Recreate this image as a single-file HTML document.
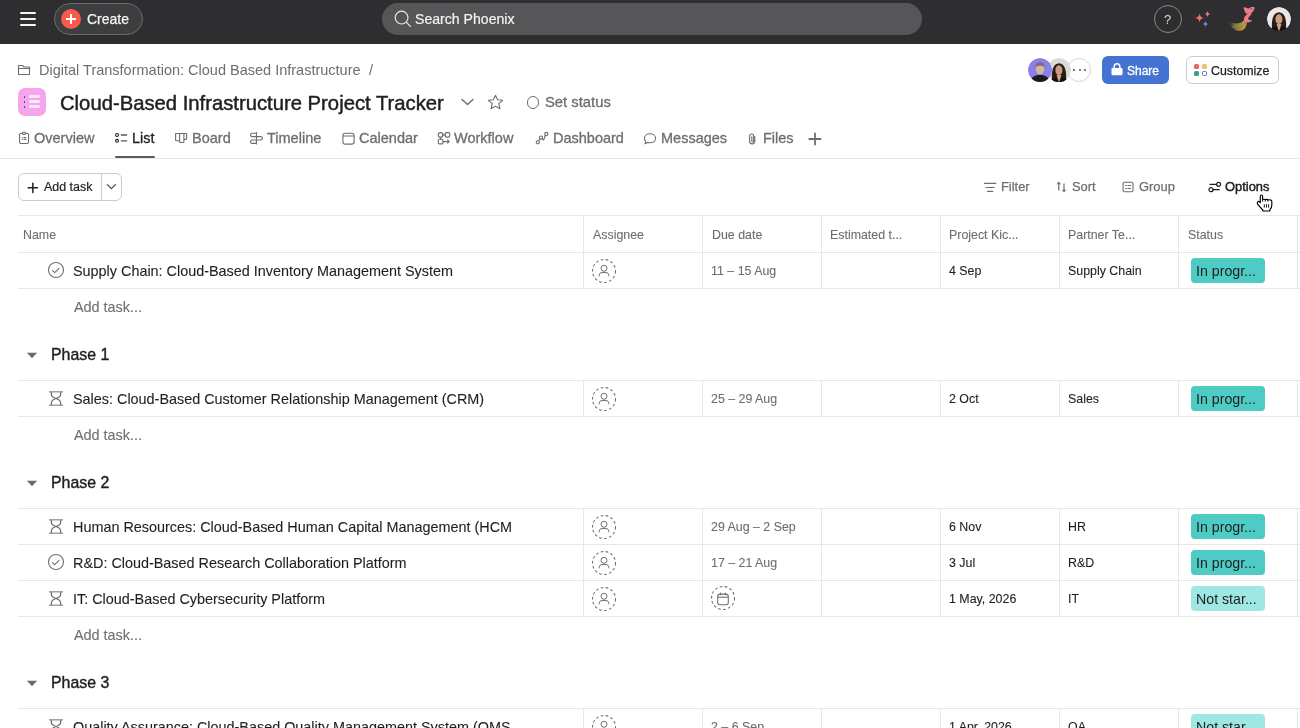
<!DOCTYPE html>
<html><head><meta charset="utf-8"><style>
html,body{margin:0;padding:0;}
body{width:1300px;height:728px;overflow:hidden;position:relative;background:#fff;font-family:"Liberation Sans",sans-serif;}
.t{position:absolute;white-space:nowrap;line-height:1;will-change:transform;}
</style></head><body>
<div style="position:absolute;left:0px;top:0px;width:1300px;height:44px;background:#2e2e30"></div>
<div style="position:absolute;left:20px;top:12.4px;width:16px;height:1.6px;background:#f5f5f5;border-radius:1px"></div>
<div style="position:absolute;left:20px;top:18.4px;width:16px;height:1.6px;background:#f5f5f5;border-radius:1px"></div>
<div style="position:absolute;left:20px;top:24.4px;width:16px;height:1.6px;background:#f5f5f5;border-radius:1px"></div>
<div style="position:absolute;left:54px;top:3px;width:89px;height:32px;background:#3d3e40;border:1px solid #6a6b6d;border-radius:16px;box-sizing:border-box"></div>
<div style="position:absolute;left:61px;top:9px;width:20px;height:20px;background:#fa5a4a;border-radius:50%"></div>
<div style="position:absolute;left:66px;top:18.15px;width:10px;height:1.7px;background:#fff"></div>
<div style="position:absolute;left:70.15px;top:14px;width:1.7px;height:10px;background:#fff"></div>
<div class="t" style="left:87px;top:12.35px;font-size:14px;color:#f5f4f3;-webkit-text-stroke:0.25px #f5f4f3">Create</div>
<div style="position:absolute;left:382.4px;top:3px;width:540px;height:32px;background:#565557;border-radius:16px"></div>
<svg style="position:absolute;left:393.6px;top:10.4px" width="18" height="18" viewBox="0 0 18 18"><circle cx="7.6" cy="7.6" r="6.4" fill="none" stroke="#e8e8e8" stroke-width="1.2"/><line x1="12.2" y1="12.2" x2="16.4" y2="16.4" stroke="#e8e8e8" stroke-width="1.2" stroke-linecap="round"/></svg>
<div class="t" style="left:414.6px;top:12.26px;font-size:14.1px;color:#f5f4f3;-webkit-text-stroke:0.2px #f5f4f3">Search Phoenix</div>
<div style="position:absolute;left:1153.5px;top:5px;width:28px;height:28px;border:1px solid #8a8a8c;border-radius:50%;box-sizing:border-box"></div>
<div class="t" style="left:1163.5px;top:12.50px;font-size:13px;color:#d8d8d8;">?</div>
<svg style="position:absolute;left:1190px;top:6px" width="26" height="26" viewBox="0 0 26 26"><path d="M9.5 7.6 Q9.94 11.56 13.9 12 Q9.94 12.44 9.5 16.4 Q9.06 12.44 5.1 12 Q9.06 11.56 9.5 7.6Z" fill="#f76b6b"/><path d="M17.5 4.7 Q17.83 7.67 20.8 8 Q17.83 8.33 17.5 11.3 Q17.17 8.33 14.2 8 Q17.17 7.67 17.5 4.7Z" fill="#ee6f86"/><path d="M15.5 14.8 Q15.82 17.68 18.7 18 Q15.82 18.32 15.5 21.2 Q15.18 18.32 12.3 18 Q15.18 17.68 15.5 14.8Z" fill="#8c78f0"/></svg>
<svg style="position:absolute;left:1220px;top:2px" width="40" height="34" viewBox="0 0 40 34"><defs><linearGradient id="tail" x1="0" y1="0.3" x2="1" y2="0.2"><stop offset="0" stop-color="#2e2e30" stop-opacity="0"/><stop offset="0.35" stop-color="#8a6d2a"/><stop offset="0.75" stop-color="#c19a2c"/><stop offset="1" stop-color="#d4a030"/></linearGradient></defs><path d="M24.8 15 C24.5 21 18 23.5 7 19.5 C10 25 15 29.5 20.5 28.8 C24.5 28.2 27.5 24.5 26.8 17 Z" fill="url(#tail)"/><path d="M12 24.5 C17 25.5 22 24.5 25.2 18.5" fill="none" stroke="#3fa59a" stroke-width="0.9" opacity="0.8"/><path d="M13 25.8 C18 27 23 25.8 25.8 20" fill="none" stroke="#6f5fb0" stroke-width="0.8" opacity="0.7"/><path d="M23.5 5.2 C25.5 5 27 6 28.5 6.5 C30 5.5 32 4.5 34.8 5.5 C34 8 33 10 31 11.5 C29.5 12.2 27.5 12 26 11.5 C25 10 24 8 23.5 5.2Z" fill="#f27a85"/><path d="M30.5 11 C27 12 24.6 13.5 24.2 16.2 C23.8 18.8 25.8 20.2 28 20.4 C30 20.6 31.6 19.4 32.2 17.6 C31 18.2 29.6 18.4 28.6 17.6 C27.8 16.8 28.4 14.8 31.5 12.5Z" fill="#f27a85"/><circle cx="31.3" cy="6.8" r="0.95" fill="#4d6fe0"/></svg>
<svg style="position:absolute;left:1267px;top:6.8px" width="24" height="24" viewBox="0 0 24 24"><defs><clipPath id="ca0"><circle cx="12" cy="12" r="12"/></clipPath></defs><g clip-path="url(#ca0)"><circle cx="12" cy="12" r="12" fill="#e9e8e6"/><path d="M5.2 25 C4.2 16 4.8 5.8 12 5.3 C19.2 5.8 19.8 16 18.8 25Z" fill="#2a1d17"/><ellipse cx="11.9" cy="12.2" rx="3.5" ry="4.9" fill="#c99d85"/><path d="M9.6 17 L12 25 L14.4 17Z" fill="#d0a38b"/><path d="M1.5 25 C3.5 20.5 7.5 19.8 9.4 19.6 L12 24.5 L14.6 19.6 C16.5 19.8 20.5 20.5 22.5 25Z" fill="#121111"/></g></svg>
<svg style="position:absolute;left:17px;top:64px" width="14" height="12" viewBox="0 0 14 12"><path d="M1.5 1.5 H5.5 L7 3 H12.5 V10.5 H1.5Z" fill="none" stroke="#6d6e6f" stroke-width="1.1" stroke-linejoin="round"/><line x1="1.5" y1="4.5" x2="12.5" y2="4.5" stroke="#6d6e6f" stroke-width="1"/></svg>
<div class="t" style="left:38.8px;top:62.73px;font-size:14.5px;color:#6d6e6f;">Digital Transformation: Cloud Based Infrastructure</div>
<div class="t" style="left:369px;top:62.73px;font-size:14.5px;color:#6d6e6f;">/</div>
<div style="position:absolute;left:18px;top:88px;width:28px;height:28px;background:#f4a5ec;border-radius:7px"></div>
<div style="position:absolute;left:23.6px;top:96px;width:1.6px;height:1.6px;background:#3d3a3c;border-radius:50%"></div>
<div style="position:absolute;left:29px;top:95.4px;width:11px;height:2.6px;background:#fbe7f8;border-radius:1.3px"></div>
<div style="position:absolute;left:23.6px;top:101px;width:1.6px;height:1.6px;background:#3d3a3c;border-radius:50%"></div>
<div style="position:absolute;left:29px;top:100.4px;width:11px;height:2.6px;background:#fbe7f8;border-radius:1.3px"></div>
<div style="position:absolute;left:23.6px;top:106px;width:1.6px;height:1.6px;background:#3d3a3c;border-radius:50%"></div>
<div style="position:absolute;left:29px;top:105.4px;width:11px;height:2.6px;background:#fbe7f8;border-radius:1.3px"></div>
<div class="t" style="left:59.7px;top:92.76px;font-size:20.25px;color:#1e1f21;-webkit-text-stroke:0.45px #1e1f21">Cloud-Based Infrastructure Project Tracker</div>
<svg style="position:absolute;left:460px;top:97px" width="15" height="10" viewBox="0 0 15 10"><path d="M2 2.5 L7.5 7.5 L13 2.5" fill="none" stroke="#6d6e6f" stroke-width="1.4" stroke-linecap="round" stroke-linejoin="round"/></svg>
<svg style="position:absolute;left:487px;top:93.6px" width="17" height="17" viewBox="0 0 17 17"><path d="M8.5 1.2 L10.6 5.8 L15.6 6.3 L11.8 9.7 L12.9 14.7 L8.5 12.1 L4.1 14.7 L5.2 9.7 L1.4 6.3 L6.4 5.8Z" fill="none" stroke="#6d6e6f" stroke-width="1.1" stroke-linejoin="round"/></svg>
<div style="position:absolute;left:526.5px;top:96px;width:12.5px;height:12.5px;border:1.2px solid #6d6e6f;border-radius:50%;box-sizing:border-box"></div>
<div class="t" style="left:544.8px;top:94.67px;font-size:14.8px;color:#6d6e6f;-webkit-text-stroke:0.3px #6d6e6f">Set status</div>
<div style="position:absolute;left:1067px;top:58px;width:24px;height:24px;background:#fff;border:1px solid #d9d7d5;border-radius:50%;box-sizing:border-box"></div>
<div style="position:absolute;left:1073.05px;top:68.6px;width:2.3px;height:2.3px;background:#555557;border-radius:50%"></div>
<div style="position:absolute;left:1078.55px;top:68.6px;width:2.3px;height:2.3px;background:#555557;border-radius:50%"></div>
<div style="position:absolute;left:1084.05px;top:68.6px;width:2.3px;height:2.3px;background:#555557;border-radius:50%"></div>
<svg style="position:absolute;left:1047px;top:58px" width="24" height="24" viewBox="0 0 24 24"><defs><clipPath id="ca2"><circle cx="12" cy="12" r="12"/></clipPath></defs><g clip-path="url(#ca2)"><circle cx="12" cy="12" r="12" fill="#dddbd6"/><path d="M5.2 25 C4.2 16 4.8 5.8 12 5.3 C19.2 5.8 19.8 16 18.8 25Z" fill="#2a1d17"/><ellipse cx="11.9" cy="12.2" rx="3.5" ry="4.9" fill="#c99d85"/><path d="M9.6 17 L12 25 L14.4 17Z" fill="#d0a38b"/><path d="M1.5 25 C3.5 20.5 7.5 19.8 9.4 19.6 L12 24.5 L14.6 19.6 C16.5 19.8 20.5 20.5 22.5 25Z" fill="#121111"/></g></svg>
<svg style="position:absolute;left:1027.5px;top:58px" width="24" height="24" viewBox="0 0 24 24"><defs><clipPath id="ca1"><circle cx="12" cy="12" r="12"/></clipPath></defs><g clip-path="url(#ca1)"><circle cx="12" cy="12" r="12" fill="#8b80e6"/><ellipse cx="12" cy="11" rx="4.3" ry="5.3" fill="#d6b2a0"/><path d="M7.4 9.5 C7.2 5.5 9.5 4.2 12 4.2 C14.8 4.2 16.8 5.5 16.6 9.5 C15.5 7.2 9 7.2 7.4 9.5Z" fill="#77716d"/><path d="M1 26 C3 18 8 17 12 17 C16 17 21 18 23 26Z" fill="#1b1b1b"/></g></svg>
<div style="position:absolute;left:1101.5px;top:56px;width:67px;height:28px;background:#4573d2;border-radius:6px"></div>
<svg style="position:absolute;left:1110px;top:62px" width="14" height="14" viewBox="0 0 14 14"><path d="M4.2 6 V4.6 A2.8 2.8 0 0 1 9.8 4.6 V6" fill="none" stroke="#fff" stroke-width="1.5"/><rect x="1.5" y="6" width="11" height="7.2" rx="1.2" fill="#fff"/></svg>
<div class="t" style="left:1127px;top:64.94px;font-size:12px;color:#ffffff;-webkit-text-stroke:0.3px #fff">Share</div>
<div style="position:absolute;left:1185.5px;top:56px;width:93.5px;height:28px;background:#fff;border:1px solid #cfcbcb;border-radius:6px;box-sizing:border-box"></div>
<div style="position:absolute;left:1194.3px;top:63.8px;width:5.2px;height:5.2px;background:#e8696b;border-radius:1.5px"></div>
<div style="position:absolute;left:1201.5px;top:63.8px;width:5.2px;height:5.2px;background:#f1bd6c;border-radius:1.5px"></div>
<div style="position:absolute;left:1194.3px;top:70.8px;width:5.2px;height:5.2px;background:#3f9e8b;border-radius:1.5px"></div>
<div style="position:absolute;left:1201.5px;top:70.8px;width:5.2px;height:5.2px;border:1.2px solid #4573d2;border-radius:1.5px;box-sizing:border-box"></div>
<div class="t" style="left:1210.6px;top:64.64px;font-size:12.36px;color:#1e1f21;-webkit-text-stroke:0.25px #1e1f21">Customize</div>
<div style="position:absolute;left:0px;top:158px;width:1300px;height:1px;background:#e9e7e6"></div>
<div class="t" style="left:33.9px;top:130.83px;font-size:14.5px;color:#6d6e6f;-webkit-text-stroke:0.3px #6d6e6f">Overview</div>
<div class="t" style="left:132px;top:130.83px;font-size:14.5px;color:#1e1f21;-webkit-text-stroke:0.3px #1e1f21">List</div>
<div class="t" style="left:192px;top:130.83px;font-size:14.5px;color:#6d6e6f;-webkit-text-stroke:0.3px #6d6e6f">Board</div>
<div class="t" style="left:267.3px;top:130.83px;font-size:14.5px;color:#6d6e6f;-webkit-text-stroke:0.3px #6d6e6f">Timeline</div>
<div class="t" style="left:359px;top:130.83px;font-size:14.5px;color:#6d6e6f;-webkit-text-stroke:0.3px #6d6e6f">Calendar</div>
<div class="t" style="left:454px;top:130.83px;font-size:14.5px;color:#6d6e6f;-webkit-text-stroke:0.3px #6d6e6f">Workflow</div>
<div class="t" style="left:552.6px;top:130.83px;font-size:14.5px;color:#6d6e6f;-webkit-text-stroke:0.3px #6d6e6f">Dashboard</div>
<div class="t" style="left:660.5px;top:130.83px;font-size:14.5px;color:#6d6e6f;-webkit-text-stroke:0.3px #6d6e6f">Messages</div>
<div class="t" style="left:762.5px;top:130.83px;font-size:14.5px;color:#6d6e6f;-webkit-text-stroke:0.3px #6d6e6f">Files</div>
<div style="position:absolute;left:115.3px;top:156px;width:40.2px;height:2px;background:#5a5b5e;border-radius:1px"></div>
<svg style="position:absolute;left:18px;top:131px" width="12" height="14" viewBox="0 0 12 14"><rect x="1.55" y="2.3" width="9" height="10.2" rx="1.6" fill="none" stroke="#6d6e6f" stroke-width="1.1" stroke-linecap="round" stroke-linejoin="round"/><rect x="4.3" y="1.2" width="3.4" height="2.2" rx="1.1" fill="#fff" stroke="#6d6e6f" stroke-width="1.1"/><path d="M4.2 6.5 H4.4 M6 6.5 H7.9 M4.2 8.4 H4.4 M6 8.4 H7.9" fill="none" stroke="#6d6e6f" stroke-width="1.1" stroke-linecap="round" stroke-linejoin="round"/></svg>
<svg style="position:absolute;left:114px;top:132px" width="14" height="12" viewBox="0 0 14 12"><circle cx="3" cy="3" r="1.45" fill="none" stroke="#1e1f21" stroke-width="1.1" stroke-linecap="round" stroke-linejoin="round"/><circle cx="3" cy="8.8" r="1.45" fill="none" stroke="#1e1f21" stroke-width="1.1" stroke-linecap="round" stroke-linejoin="round"/><path d="M7.3 3 H12.6 M7.3 8.8 H12.6" fill="none" stroke="#555" stroke-width="1.3" stroke-linecap="round"/></svg>
<svg style="position:absolute;left:174px;top:132px" width="14" height="12" viewBox="0 0 14 12"><path d="M1.6 1.5 H12.6 V6.6 Q12.6 7.4 11.8 7.4 H9.9 V9.8 Q9.9 10.5 9.2 10.5 H6.3 Q5.6 10.5 5.6 9.8 V8.8 H2.4 Q1.6 8.8 1.6 8 Z M5.6 1.5 V8.8 M9.9 1.5 V7.4" fill="none" stroke="#6d6e6f" stroke-width="1.1" stroke-linecap="round" stroke-linejoin="round"/></svg>
<svg style="position:absolute;left:249px;top:131px" width="15" height="14" viewBox="0 0 15 14"><path d="M7.2 2.2 H3.2 A1.7 1.7 0 0 0 3.2 5.6 H7.2 M7.7 5.6 H11.7 A1.7 1.7 0 0 1 11.7 9 H7.7 M7.2 9 H3.2 A1.7 1.7 0 0 0 3.2 12.4 H7.2 M7.45 1.5 V13" fill="none" stroke="#6d6e6f" stroke-width="1.1" stroke-linecap="round" stroke-linejoin="round"/></svg>
<svg style="position:absolute;left:341px;top:131px" width="15" height="14" viewBox="0 0 15 14"><rect x="1.9" y="2.2" width="11.2" height="10.9" rx="2.4" fill="none" stroke="#6d6e6f" stroke-width="1.1" stroke-linecap="round" stroke-linejoin="round"/><path d="M1.9 5 H13.1" fill="none" stroke="#6d6e6f" stroke-width="1.1" stroke-linecap="round" stroke-linejoin="round"/></svg>
<svg style="position:absolute;left:437px;top:131px" width="14" height="14" viewBox="0 0 14 14"><circle cx="3.6" cy="3.9" r="2.3" fill="none" stroke="#6d6e6f" stroke-width="1.1" stroke-linecap="round" stroke-linejoin="round"/><rect x="8.2" y="1.6" width="4.5" height="4.5" rx="1" fill="none" stroke="#6d6e6f" stroke-width="1.1" stroke-linecap="round" stroke-linejoin="round"/><rect x="1.3" y="8.3" width="4.6" height="4.6" rx="1" fill="none" stroke="#6d6e6f" stroke-width="1.1" stroke-linecap="round" stroke-linejoin="round"/><path d="M5.9 3.9 H8.2 M3.6 6.2 V8.3 M5.9 10.6 H12.2 M10.6 9 L12.2 10.6 L10.6 12.2" fill="none" stroke="#6d6e6f" stroke-width="1.1" stroke-linecap="round" stroke-linejoin="round"/></svg>
<svg style="position:absolute;left:535px;top:131px" width="14" height="14" viewBox="0 0 14 14"><circle cx="2.8" cy="11.3" r="1.6" fill="none" stroke="#6d6e6f" stroke-width="1.1" stroke-linecap="round" stroke-linejoin="round"/><circle cx="6" cy="6.6" r="1.6" fill="none" stroke="#6d6e6f" stroke-width="1.1" stroke-linecap="round" stroke-linejoin="round"/><circle cx="8.6" cy="8.6" r="0.1" fill="none" stroke="#6d6e6f" stroke-width="1.1" stroke-linecap="round" stroke-linejoin="round"/><circle cx="11.3" cy="3" r="1.6" fill="none" stroke="#6d6e6f" stroke-width="1.1" stroke-linecap="round" stroke-linejoin="round"/><path d="M3.7 10 L5.1 7.9 M7.1 7.6 L8.2 9 M8.9 8.3 L10.4 4.3" fill="none" stroke="#6d6e6f" stroke-width="1.1" stroke-linecap="round" stroke-linejoin="round"/></svg>
<svg style="position:absolute;left:643px;top:132px" width="14" height="13" viewBox="0 0 14 13"><path d="M7 1.8 C10.3 1.8 12.6 3.7 12.6 6.3 C12.6 8.9 10.3 10.8 7 10.8 C6.1 10.8 5.3 10.65 4.6 10.4 L2 11.8 L2.7 9.4 C1.8 8.6 1.4 7.5 1.4 6.3 C1.4 3.7 3.7 1.8 7 1.8Z" fill="none" stroke="#6d6e6f" stroke-width="1.1" stroke-linecap="round" stroke-linejoin="round"/></svg>
<svg style="position:absolute;left:747px;top:132px" width="11" height="13" viewBox="0 0 11 13"><path d="M7.8 4.5 V9.3 A2.6 2.6 0 0 1 2.6 9.3 V4 A2 2 0 0 1 6.6 4 V9 A0.9 0.9 0 0 1 4.8 9 V4.8" fill="none" stroke="#6d6e6f" stroke-width="1.1" stroke-linecap="round" stroke-linejoin="round"/></svg>
<svg style="position:absolute;left:807.5px;top:132px" width="14" height="14" viewBox="0 0 14 14"><path d="M7 1.3 V12.6 M1.3 7 H12.7" fill="none" stroke="#6d6e6f" stroke-width="1.8" stroke-linecap="round"/></svg>
<div style="position:absolute;left:18px;top:173px;width:104px;height:28px;border:1px solid #cfcbcb;border-radius:6px;box-sizing:border-box;background:#fff"></div>
<div style="position:absolute;left:100.5px;top:174px;width:1px;height:26px;background:#cfcbcb"></div>
<svg style="position:absolute;left:27px;top:181.5px" width="12" height="12" viewBox="0 0 12 12"><path d="M5.85 1.2 V10.4 M1.2 5.8 H10.4" fill="none" stroke="#1e1f21" stroke-width="1.5" stroke-linecap="round"/></svg>
<div class="t" style="left:43.8px;top:181.37px;font-size:12.44px;color:#1e1f21;-webkit-text-stroke:0.2px #1e1f21">Add task</div>
<svg style="position:absolute;left:106px;top:183px" width="11" height="8" viewBox="0 0 11 8"><path d="M1.3 1.6 L5.4 5.6 L9.5 1.6" fill="none" stroke="#3d3e40" stroke-width="1.1" stroke-linecap="round" stroke-linejoin="round"/></svg>
<div class="t" style="left:1000.8px;top:180.88px;font-size:12.9px;color:#6d6e6f;-webkit-text-stroke:0.25px #6d6e6f">Filter</div>
<div class="t" style="left:1072.2px;top:180.88px;font-size:12.9px;color:#6d6e6f;-webkit-text-stroke:0.25px #6d6e6f">Sort</div>
<div class="t" style="left:1139px;top:180.88px;font-size:12.9px;color:#6d6e6f;-webkit-text-stroke:0.25px #6d6e6f">Group</div>
<div class="t" style="left:1225.4px;top:180.88px;font-size:12.9px;color:#1e1f21;-webkit-text-stroke:0.45px #1e1f21">Options</div>
<svg style="position:absolute;left:983px;top:181px" width="14" height="12" viewBox="0 0 14 12"><path d="M1.5 2.4 H12.7 M3 6.5 H11.2 M4.5 10.4 H9.7" fill="none" stroke="#6d6e6f" stroke-width="1.2" stroke-linecap="round"/></svg>
<svg style="position:absolute;left:1055px;top:180px" width="12" height="14" viewBox="0 0 12 14"><path d="M3.8 4 V10.5 M9 3.5 V10" fill="none" stroke="#6d6e6f" stroke-width="1.2"/><path d="M1.6 4.3 L3.8 1.4 L6 4.3Z M6.8 9.7 L9 12.6 L11.2 9.7Z" fill="#6d6e6f"/></svg>
<svg style="position:absolute;left:1122px;top:181px" width="12" height="12" viewBox="0 0 12 12"><rect x="1.1" y="1.2" width="9.9" height="9.6" rx="1.6" fill="none" stroke="#6d6e6f" stroke-width="1.1"/><path d="M3.6 4.5 H4.4 M5.9 4.5 H8.6 M3.6 7.5 H4.4 M5.9 7.5 H8.6" fill="none" stroke="#6d6e6f" stroke-width="1.1" stroke-linecap="round"/></svg>
<svg style="position:absolute;left:1208px;top:181px" width="14" height="12" viewBox="0 0 14 12"><circle cx="10.6" cy="3.3" r="2" fill="none" stroke="#1e1f21" stroke-width="1.2"/><circle cx="3" cy="8.7" r="2" fill="none" stroke="#1e1f21" stroke-width="1.2"/><path d="M2 3.3 H8.6 M5 8.7 H11.2" fill="none" stroke="#1e1f21" stroke-width="1.2" stroke-linecap="round"/></svg>
<svg style="position:absolute;left:1250px;top:190px" width="30" height="25" viewBox="0 0 30 25"><path d="M10.3 12.8 V6.6 C10.3 5.6 10.9 5 11.45 5 C12 5 12.6 5.6 12.6 6.6 V9.6 C13 9.1 15 9.1 15.3 9.8 C15.8 9.2 17.6 9.2 17.9 10 C18.6 9.6 21.8 9.6 21.8 11.2 V15.2 C21.8 17.2 20.8 18.7 19.8 19.8 V21 H12.8 V20 C11.2 18.5 9.5 16.6 7.6 14.2 C7 13.3 7.3 11.6 8.6 11.4 C9.3 11.3 9.8 12 10.3 12.8Z" fill="#fff" stroke="#000" stroke-width="1.15" stroke-linejoin="round"/><path d="M12.6 9.6 V11.6 M15.3 9.8 V11.6 M17.9 10 V11.6 M14.3 14.2 V17.6 M16.5 14.2 V17.6 M18.6 14.2 V17.6" stroke="#000" stroke-width="0.9"/></svg>
<div style="position:absolute;left:18px;top:215px;width:1282px;height:1px;background:#e9e7e6"></div>
<div style="position:absolute;left:18px;top:252px;width:1282px;height:1px;background:#e9e7e6"></div>
<div style="position:absolute;left:583px;top:215px;width:1px;height:37px;background:#e9e7e6"></div>
<div style="position:absolute;left:702px;top:215px;width:1px;height:37px;background:#e9e7e6"></div>
<div style="position:absolute;left:821px;top:215px;width:1px;height:37px;background:#e9e7e6"></div>
<div style="position:absolute;left:940px;top:215px;width:1px;height:37px;background:#e9e7e6"></div>
<div style="position:absolute;left:1059px;top:215px;width:1px;height:37px;background:#e9e7e6"></div>
<div style="position:absolute;left:1178px;top:215px;width:1px;height:37px;background:#e9e7e6"></div>
<div style="position:absolute;left:1297px;top:215px;width:1px;height:37px;background:#e9e7e6"></div>
<div class="t" style="left:22.5px;top:228.70px;font-size:12.4px;color:#6d6e6f;-webkit-text-stroke:0.1px #6d6e6f">Name</div>
<div class="t" style="left:592.5px;top:228.70px;font-size:12.4px;color:#6d6e6f;-webkit-text-stroke:0.1px #6d6e6f">Assignee</div>
<div class="t" style="left:711.5px;top:228.70px;font-size:12.4px;color:#6d6e6f;-webkit-text-stroke:0.1px #6d6e6f">Due date</div>
<div class="t" style="left:830.4px;top:228.70px;font-size:12.4px;color:#6d6e6f;-webkit-text-stroke:0.1px #6d6e6f">Estimated t...</div>
<div class="t" style="left:949.2px;top:228.70px;font-size:12.4px;color:#6d6e6f;-webkit-text-stroke:0.1px #6d6e6f">Project Kic...</div>
<div class="t" style="left:1068px;top:228.70px;font-size:12.4px;color:#6d6e6f;-webkit-text-stroke:0.1px #6d6e6f">Partner Te...</div>
<div class="t" style="left:1187.5px;top:228.70px;font-size:12.4px;color:#6d6e6f;-webkit-text-stroke:0.1px #6d6e6f">Status</div>
<div style="position:absolute;left:18px;top:288px;width:1282px;height:1px;background:#e9e7e6"></div>
<div style="position:absolute;left:583px;top:252px;width:1px;height:36px;background:#e9e7e6"></div>
<div style="position:absolute;left:702px;top:252px;width:1px;height:36px;background:#e9e7e6"></div>
<div style="position:absolute;left:821px;top:252px;width:1px;height:36px;background:#e9e7e6"></div>
<div style="position:absolute;left:940px;top:252px;width:1px;height:36px;background:#e9e7e6"></div>
<div style="position:absolute;left:1059px;top:252px;width:1px;height:36px;background:#e9e7e6"></div>
<div style="position:absolute;left:1178px;top:252px;width:1px;height:36px;background:#e9e7e6"></div>
<div style="position:absolute;left:1297px;top:252px;width:1px;height:36px;background:#e9e7e6"></div>
<svg style="position:absolute;left:47px;top:261.4px" width="18" height="18" viewBox="0 0 18 18"><circle cx="9" cy="9" r="7.5" fill="none" stroke="#6d6e6f" stroke-width="1.1"/><path d="M5.6 9.7 L7.7 11.6 L12 7.4" fill="none" stroke="#6d6e6f" stroke-width="1.1" stroke-linecap="round" stroke-linejoin="round"/></svg>
<div class="t" style="left:72.9px;top:263.81px;font-size:14.4px;color:#1e1f21;-webkit-text-stroke:0.1px #1e1f21">Supply Chain: Cloud-Based Inventory Management System</div>
<svg style="position:absolute;left:591px;top:257.6px" width="26" height="26" viewBox="0 0 26 26"><circle cx="13" cy="13" r="11.5" fill="none" stroke="#6d6e6f" stroke-width="1.05" stroke-dasharray="2.7 2.35"/><circle cx="13" cy="10.3" r="3" fill="none" stroke="#6d6e6f" stroke-width="1"/><path d="M8.2 18.3 V17.2 C8.2 15.5 9.5 14.6 11 14.6 H15 C16.5 14.6 17.8 15.5 17.8 17.2 V18.3" fill="none" stroke="#6d6e6f" stroke-width="1"/></svg>
<div class="t" style="left:711px;top:265.10px;font-size:12.4px;color:#6d6e6f;-webkit-text-stroke:0.1px #6d6e6f">11 – 15 Aug</div>
<div class="t" style="left:949.2px;top:264.90px;font-size:12.4px;color:#1e1f21;-webkit-text-stroke:0.1px #1e1f21">4 Sep</div>
<div class="t" style="left:1068px;top:264.90px;font-size:12.4px;color:#1e1f21;-webkit-text-stroke:0.1px #1e1f21">Supply Chain</div>
<div style="position:absolute;left:1191px;top:258px;width:74px;height:24.5px;background:#4ecbc4;border-radius:4px"></div>
<div class="t" style="left:1195.5px;top:263.98px;font-size:14.2px;color:#1e1f21;">In progr...</div>
<div class="t" style="left:74.1px;top:299.81px;font-size:14.4px;color:#6d6e6f;-webkit-text-stroke:0.1px #6d6e6f">Add task...</div>
<svg style="position:absolute;left:26px;top:352px" width="12" height="7" viewBox="0 0 12 7"><path d="M0.8 0.7 H11.2 L6 6.3Z" fill="#6d6e6f"/></svg>
<div class="t" style="left:50.6px;top:347.44px;font-size:15.9px;color:#1e1f21;-webkit-text-stroke:0.4px #1e1f21">Phase 1</div>
<div style="position:absolute;left:18px;top:380px;width:1282px;height:1px;background:#e9e7e6"></div>
<div style="position:absolute;left:18px;top:416px;width:1282px;height:1px;background:#e9e7e6"></div>
<div style="position:absolute;left:583px;top:380px;width:1px;height:36px;background:#e9e7e6"></div>
<div style="position:absolute;left:702px;top:380px;width:1px;height:36px;background:#e9e7e6"></div>
<div style="position:absolute;left:821px;top:380px;width:1px;height:36px;background:#e9e7e6"></div>
<div style="position:absolute;left:940px;top:380px;width:1px;height:36px;background:#e9e7e6"></div>
<div style="position:absolute;left:1059px;top:380px;width:1px;height:36px;background:#e9e7e6"></div>
<div style="position:absolute;left:1178px;top:380px;width:1px;height:36px;background:#e9e7e6"></div>
<div style="position:absolute;left:1297px;top:380px;width:1px;height:36px;background:#e9e7e6"></div>
<svg style="position:absolute;left:48px;top:391px" width="16" height="16" viewBox="0 0 16 16"><path d="M1 0.8 H15 M1 14.2 H15" stroke="#a0a1a2" stroke-width="1.6"/><path d="M3.3 1 V3.2 C3.3 5.8 5.5 6.6 8 7.5 C10.5 6.6 12.7 5.8 12.7 3.2 V1 M3.3 14 V11.8 C3.3 9.2 5.5 8.4 8 7.5 C10.5 8.4 12.7 9.2 12.7 11.8 V14" fill="none" stroke="#5d5e60" stroke-width="1.1"/></svg>
<div class="t" style="left:72.9px;top:391.81px;font-size:14.4px;color:#1e1f21;-webkit-text-stroke:0.1px #1e1f21">Sales: Cloud-Based Customer Relationship Management (CRM)</div>
<svg style="position:absolute;left:591px;top:385.6px" width="26" height="26" viewBox="0 0 26 26"><circle cx="13" cy="13" r="11.5" fill="none" stroke="#6d6e6f" stroke-width="1.05" stroke-dasharray="2.7 2.35"/><circle cx="13" cy="10.3" r="3" fill="none" stroke="#6d6e6f" stroke-width="1"/><path d="M8.2 18.3 V17.2 C8.2 15.5 9.5 14.6 11 14.6 H15 C16.5 14.6 17.8 15.5 17.8 17.2 V18.3" fill="none" stroke="#6d6e6f" stroke-width="1"/></svg>
<div class="t" style="left:711px;top:393.10px;font-size:12.4px;color:#6d6e6f;-webkit-text-stroke:0.1px #6d6e6f">25 – 29 Aug</div>
<div class="t" style="left:949.2px;top:392.90px;font-size:12.4px;color:#1e1f21;-webkit-text-stroke:0.1px #1e1f21">2 Oct</div>
<div class="t" style="left:1068px;top:392.90px;font-size:12.4px;color:#1e1f21;-webkit-text-stroke:0.1px #1e1f21">Sales</div>
<div style="position:absolute;left:1191px;top:386px;width:74px;height:24.5px;background:#4ecbc4;border-radius:4px"></div>
<div class="t" style="left:1195.5px;top:391.98px;font-size:14.2px;color:#1e1f21;">In progr...</div>
<div class="t" style="left:74.1px;top:427.81px;font-size:14.4px;color:#6d6e6f;-webkit-text-stroke:0.1px #6d6e6f">Add task...</div>
<svg style="position:absolute;left:26px;top:480px" width="12" height="7" viewBox="0 0 12 7"><path d="M0.8 0.7 H11.2 L6 6.3Z" fill="#6d6e6f"/></svg>
<div class="t" style="left:50.6px;top:475.44px;font-size:15.9px;color:#1e1f21;-webkit-text-stroke:0.4px #1e1f21">Phase 2</div>
<div style="position:absolute;left:18px;top:508px;width:1282px;height:1px;background:#e9e7e6"></div>
<div style="position:absolute;left:18px;top:544px;width:1282px;height:1px;background:#e9e7e6"></div>
<div style="position:absolute;left:583px;top:508px;width:1px;height:36px;background:#e9e7e6"></div>
<div style="position:absolute;left:702px;top:508px;width:1px;height:36px;background:#e9e7e6"></div>
<div style="position:absolute;left:821px;top:508px;width:1px;height:36px;background:#e9e7e6"></div>
<div style="position:absolute;left:940px;top:508px;width:1px;height:36px;background:#e9e7e6"></div>
<div style="position:absolute;left:1059px;top:508px;width:1px;height:36px;background:#e9e7e6"></div>
<div style="position:absolute;left:1178px;top:508px;width:1px;height:36px;background:#e9e7e6"></div>
<div style="position:absolute;left:1297px;top:508px;width:1px;height:36px;background:#e9e7e6"></div>
<svg style="position:absolute;left:48px;top:519px" width="16" height="16" viewBox="0 0 16 16"><path d="M1 0.8 H15 M1 14.2 H15" stroke="#a0a1a2" stroke-width="1.6"/><path d="M3.3 1 V3.2 C3.3 5.8 5.5 6.6 8 7.5 C10.5 6.6 12.7 5.8 12.7 3.2 V1 M3.3 14 V11.8 C3.3 9.2 5.5 8.4 8 7.5 C10.5 8.4 12.7 9.2 12.7 11.8 V14" fill="none" stroke="#5d5e60" stroke-width="1.1"/></svg>
<div class="t" style="left:72.9px;top:519.81px;font-size:14.4px;color:#1e1f21;-webkit-text-stroke:0.1px #1e1f21">Human Resources: Cloud-Based Human Capital Management (HCM</div>
<svg style="position:absolute;left:591px;top:513.6px" width="26" height="26" viewBox="0 0 26 26"><circle cx="13" cy="13" r="11.5" fill="none" stroke="#6d6e6f" stroke-width="1.05" stroke-dasharray="2.7 2.35"/><circle cx="13" cy="10.3" r="3" fill="none" stroke="#6d6e6f" stroke-width="1"/><path d="M8.2 18.3 V17.2 C8.2 15.5 9.5 14.6 11 14.6 H15 C16.5 14.6 17.8 15.5 17.8 17.2 V18.3" fill="none" stroke="#6d6e6f" stroke-width="1"/></svg>
<div class="t" style="left:711px;top:521.10px;font-size:12.4px;color:#6d6e6f;-webkit-text-stroke:0.1px #6d6e6f">29 Aug – 2 Sep</div>
<div class="t" style="left:949.2px;top:520.90px;font-size:12.4px;color:#1e1f21;-webkit-text-stroke:0.1px #1e1f21">6 Nov</div>
<div class="t" style="left:1068px;top:520.90px;font-size:12.4px;color:#1e1f21;-webkit-text-stroke:0.1px #1e1f21">HR</div>
<div style="position:absolute;left:1191px;top:514px;width:74px;height:24.5px;background:#4ecbc4;border-radius:4px"></div>
<div class="t" style="left:1195.5px;top:519.98px;font-size:14.2px;color:#1e1f21;">In progr...</div>
<div style="position:absolute;left:18px;top:580px;width:1282px;height:1px;background:#e9e7e6"></div>
<div style="position:absolute;left:583px;top:544px;width:1px;height:36px;background:#e9e7e6"></div>
<div style="position:absolute;left:702px;top:544px;width:1px;height:36px;background:#e9e7e6"></div>
<div style="position:absolute;left:821px;top:544px;width:1px;height:36px;background:#e9e7e6"></div>
<div style="position:absolute;left:940px;top:544px;width:1px;height:36px;background:#e9e7e6"></div>
<div style="position:absolute;left:1059px;top:544px;width:1px;height:36px;background:#e9e7e6"></div>
<div style="position:absolute;left:1178px;top:544px;width:1px;height:36px;background:#e9e7e6"></div>
<div style="position:absolute;left:1297px;top:544px;width:1px;height:36px;background:#e9e7e6"></div>
<svg style="position:absolute;left:47px;top:553.4px" width="18" height="18" viewBox="0 0 18 18"><circle cx="9" cy="9" r="7.5" fill="none" stroke="#6d6e6f" stroke-width="1.1"/><path d="M5.6 9.7 L7.7 11.6 L12 7.4" fill="none" stroke="#6d6e6f" stroke-width="1.1" stroke-linecap="round" stroke-linejoin="round"/></svg>
<div class="t" style="left:72.9px;top:555.81px;font-size:14.4px;color:#1e1f21;-webkit-text-stroke:0.1px #1e1f21">R&amp;D: Cloud-Based Research Collaboration Platform</div>
<svg style="position:absolute;left:591px;top:549.6px" width="26" height="26" viewBox="0 0 26 26"><circle cx="13" cy="13" r="11.5" fill="none" stroke="#6d6e6f" stroke-width="1.05" stroke-dasharray="2.7 2.35"/><circle cx="13" cy="10.3" r="3" fill="none" stroke="#6d6e6f" stroke-width="1"/><path d="M8.2 18.3 V17.2 C8.2 15.5 9.5 14.6 11 14.6 H15 C16.5 14.6 17.8 15.5 17.8 17.2 V18.3" fill="none" stroke="#6d6e6f" stroke-width="1"/></svg>
<div class="t" style="left:711px;top:557.10px;font-size:12.4px;color:#6d6e6f;-webkit-text-stroke:0.1px #6d6e6f">17 – 21 Aug</div>
<div class="t" style="left:949.2px;top:556.90px;font-size:12.4px;color:#1e1f21;-webkit-text-stroke:0.1px #1e1f21">3 Jul</div>
<div class="t" style="left:1068px;top:556.90px;font-size:12.4px;color:#1e1f21;-webkit-text-stroke:0.1px #1e1f21">R&amp;D</div>
<div style="position:absolute;left:1191px;top:550px;width:74px;height:24.5px;background:#4ecbc4;border-radius:4px"></div>
<div class="t" style="left:1195.5px;top:555.98px;font-size:14.2px;color:#1e1f21;">In progr...</div>
<div style="position:absolute;left:18px;top:616px;width:1282px;height:1px;background:#e9e7e6"></div>
<div style="position:absolute;left:583px;top:580px;width:1px;height:36px;background:#e9e7e6"></div>
<div style="position:absolute;left:702px;top:580px;width:1px;height:36px;background:#e9e7e6"></div>
<div style="position:absolute;left:821px;top:580px;width:1px;height:36px;background:#e9e7e6"></div>
<div style="position:absolute;left:940px;top:580px;width:1px;height:36px;background:#e9e7e6"></div>
<div style="position:absolute;left:1059px;top:580px;width:1px;height:36px;background:#e9e7e6"></div>
<div style="position:absolute;left:1178px;top:580px;width:1px;height:36px;background:#e9e7e6"></div>
<div style="position:absolute;left:1297px;top:580px;width:1px;height:36px;background:#e9e7e6"></div>
<svg style="position:absolute;left:48px;top:591px" width="16" height="16" viewBox="0 0 16 16"><path d="M1 0.8 H15 M1 14.2 H15" stroke="#a0a1a2" stroke-width="1.6"/><path d="M3.3 1 V3.2 C3.3 5.8 5.5 6.6 8 7.5 C10.5 6.6 12.7 5.8 12.7 3.2 V1 M3.3 14 V11.8 C3.3 9.2 5.5 8.4 8 7.5 C10.5 8.4 12.7 9.2 12.7 11.8 V14" fill="none" stroke="#5d5e60" stroke-width="1.1"/></svg>
<div class="t" style="left:72.9px;top:591.81px;font-size:14.4px;color:#1e1f21;-webkit-text-stroke:0.1px #1e1f21">IT: Cloud-Based Cybersecurity Platform</div>
<svg style="position:absolute;left:591px;top:585.6px" width="26" height="26" viewBox="0 0 26 26"><circle cx="13" cy="13" r="11.5" fill="none" stroke="#6d6e6f" stroke-width="1.05" stroke-dasharray="2.7 2.35"/><circle cx="13" cy="10.3" r="3" fill="none" stroke="#6d6e6f" stroke-width="1"/><path d="M8.2 18.3 V17.2 C8.2 15.5 9.5 14.6 11 14.6 H15 C16.5 14.6 17.8 15.5 17.8 17.2 V18.3" fill="none" stroke="#6d6e6f" stroke-width="1"/></svg>
<svg style="position:absolute;left:710px;top:585.4px" width="26" height="26" viewBox="0 0 26 26"><circle cx="13" cy="13" r="11.5" fill="none" stroke="#6d6e6f" stroke-width="1.05" stroke-dasharray="2.7 2.35"/><rect x="7.7" y="9.1" width="10.6" height="10.6" rx="2.2" fill="none" stroke="#6d6e6f" stroke-width="1.05"/><line x1="7.7" y1="12.2" x2="18.3" y2="12.2" stroke="#6d6e6f" stroke-width="1.1"/><path d="M10.6 8 V9.8 M15.4 8 V9.8" stroke="#6d6e6f" stroke-width="1.1" stroke-linecap="round"/></svg>
<div class="t" style="left:949.2px;top:592.90px;font-size:12.4px;color:#1e1f21;-webkit-text-stroke:0.1px #1e1f21">1 May, 2026</div>
<div class="t" style="left:1068px;top:592.90px;font-size:12.4px;color:#1e1f21;-webkit-text-stroke:0.1px #1e1f21">IT</div>
<div style="position:absolute;left:1191px;top:586px;width:74px;height:24.5px;background:#9ee7e3;border-radius:4px"></div>
<div class="t" style="left:1195.5px;top:591.98px;font-size:14.2px;color:#1e1f21;">Not star...</div>
<div class="t" style="left:74.1px;top:627.81px;font-size:14.4px;color:#6d6e6f;-webkit-text-stroke:0.1px #6d6e6f">Add task...</div>
<svg style="position:absolute;left:26px;top:680px" width="12" height="7" viewBox="0 0 12 7"><path d="M0.8 0.7 H11.2 L6 6.3Z" fill="#6d6e6f"/></svg>
<div class="t" style="left:50.6px;top:675.44px;font-size:15.9px;color:#1e1f21;-webkit-text-stroke:0.4px #1e1f21">Phase 3</div>
<div style="position:absolute;left:18px;top:708px;width:1282px;height:1px;background:#e9e7e6"></div>
<div style="position:absolute;left:18px;top:744px;width:1282px;height:1px;background:#e9e7e6"></div>
<div style="position:absolute;left:583px;top:708px;width:1px;height:36px;background:#e9e7e6"></div>
<div style="position:absolute;left:702px;top:708px;width:1px;height:36px;background:#e9e7e6"></div>
<div style="position:absolute;left:821px;top:708px;width:1px;height:36px;background:#e9e7e6"></div>
<div style="position:absolute;left:940px;top:708px;width:1px;height:36px;background:#e9e7e6"></div>
<div style="position:absolute;left:1059px;top:708px;width:1px;height:36px;background:#e9e7e6"></div>
<div style="position:absolute;left:1178px;top:708px;width:1px;height:36px;background:#e9e7e6"></div>
<div style="position:absolute;left:1297px;top:708px;width:1px;height:36px;background:#e9e7e6"></div>
<svg style="position:absolute;left:48px;top:719px" width="16" height="16" viewBox="0 0 16 16"><path d="M1 0.8 H15 M1 14.2 H15" stroke="#a0a1a2" stroke-width="1.6"/><path d="M3.3 1 V3.2 C3.3 5.8 5.5 6.6 8 7.5 C10.5 6.6 12.7 5.8 12.7 3.2 V1 M3.3 14 V11.8 C3.3 9.2 5.5 8.4 8 7.5 C10.5 8.4 12.7 9.2 12.7 11.8 V14" fill="none" stroke="#5d5e60" stroke-width="1.1"/></svg>
<div class="t" style="left:72.9px;top:719.81px;font-size:14.4px;color:#1e1f21;-webkit-text-stroke:0.1px #1e1f21">Quality Assurance: Cloud-Based Quality Management System (QMS</div>
<svg style="position:absolute;left:591px;top:713.6px" width="26" height="26" viewBox="0 0 26 26"><circle cx="13" cy="13" r="11.5" fill="none" stroke="#6d6e6f" stroke-width="1.05" stroke-dasharray="2.7 2.35"/><circle cx="13" cy="10.3" r="3" fill="none" stroke="#6d6e6f" stroke-width="1"/><path d="M8.2 18.3 V17.2 C8.2 15.5 9.5 14.6 11 14.6 H15 C16.5 14.6 17.8 15.5 17.8 17.2 V18.3" fill="none" stroke="#6d6e6f" stroke-width="1"/></svg>
<div class="t" style="left:711px;top:721.10px;font-size:12.4px;color:#6d6e6f;-webkit-text-stroke:0.1px #6d6e6f">2 – 6 Sep</div>
<div class="t" style="left:949.2px;top:720.90px;font-size:12.4px;color:#1e1f21;-webkit-text-stroke:0.1px #1e1f21">1 Apr, 2026</div>
<div class="t" style="left:1068px;top:720.90px;font-size:12.4px;color:#1e1f21;-webkit-text-stroke:0.1px #1e1f21">QA</div>
<div style="position:absolute;left:1191px;top:714px;width:74px;height:24.5px;background:#9ee7e3;border-radius:4px"></div>
<div class="t" style="left:1195.5px;top:719.98px;font-size:14.2px;color:#1e1f21;">Not star...</div>
</body></html>
